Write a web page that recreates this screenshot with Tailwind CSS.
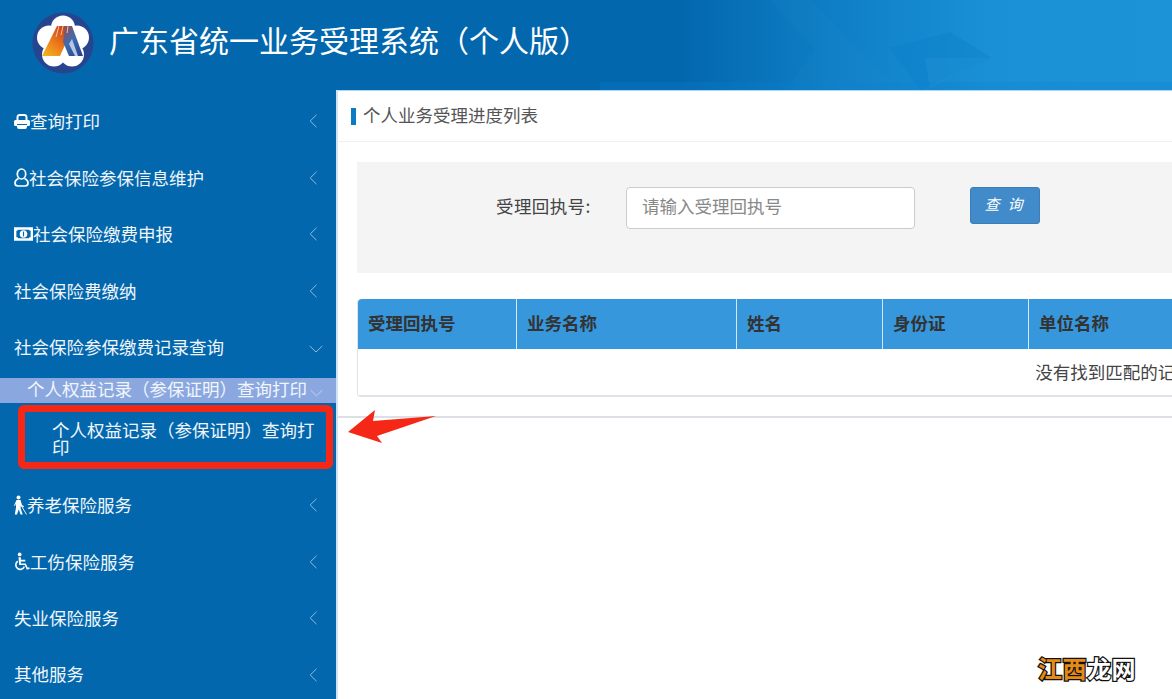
<!DOCTYPE html>
<html lang="zh-CN">
<head>
<meta charset="utf-8">
<script src="https://cdn.jsdelivr.net/npm/@tailwindcss/browser@4"></script>
<title>广东省统一业务受理系统</title>
</head>
<body class="relative w-[1172px] h-[699px] overflow-hidden bg-white font-['Noto_Sans_CJK_SC','Noto_Sans',sans-serif]">
<header class="relative h-[90px] overflow-hidden bg-[linear-gradient(90deg,#0367ad_0%,#0367ad_58%,#0f80c8_72%,#1a91d6_85%,#1b93d6_100%)]">
  <svg class="absolute right-0 top-0" width="572" height="90" viewBox="0 0 572 90">
    <polygon points="170,0 215,50 185,90 300,90 210,0" fill="#ffffff" fill-opacity="0.015"/>
    <polygon points="290,48 350,32 392,58 320,90" fill="#0b7fc8" fill-opacity="0.4"/>
    <polygon points="325,58 392,58 330,88" fill="#2495d8" fill-opacity="0.35"/>
    <rect x="0" y="82" width="572" height="8" fill="#0b80cf" fill-opacity="0.25"/>
  </svg>
  <div class="relative flex items-center h-[90px] pl-[32px] gap-[16px]">
    <svg width="62" height="62" viewBox="0 0 62 62" class="shrink-0 mt-[-4px]">
      <defs>
        <linearGradient id="org" x1="0.8" y1="0" x2="0.1" y2="1"><stop offset="0" stop-color="#c9401f"/><stop offset="0.55" stop-color="#ee7d1a"/><stop offset="1" stop-color="#f5b321"/></linearGradient>
        <linearGradient id="blu" x1="0.2" y1="0" x2="0.8" y2="1"><stop offset="0" stop-color="#8a4f5c"/><stop offset="0.45" stop-color="#3f6db0"/><stop offset="1" stop-color="#27458f"/></linearGradient>
      </defs>
      <circle cx="31" cy="31" r="30.500" fill="#27458f"/>
      <g fill="#ffffff"><circle cx="31" cy="15.500" r="12"/><circle cx="45" cy="25.500" r="12"/><circle cx="40" cy="42.500" r="12"/><circle cx="22" cy="42.500" r="12"/><circle cx="17" cy="25.500" r="12"/><circle cx="31" cy="31" r="14"/></g>
      <path d="M25 14h8l3 12-8 18H10z" fill="url(#org)"/>
      <path d="M33 14h7l11 30H37l-6-14z" fill="url(#blu)"/>
      <path d="M40 27l6 17h-3l-6-12z" fill="#b7c8e6"/>
      <path d="M27 14l-3 11M31 14l-2 9M36 14l-1 7" stroke="#f6d0b0" stroke-width="0.900" fill="none"/>
    </svg>
    <h1 class="text-[30px] leading-[40px] text-white font-normal mt-[-12px] ml-[-1px] whitespace-nowrap">广东省统一业务受理系统（个人版）</h1>
  </div>
</header>

<div class="flex h-[609px]">
  <aside class="w-[336px] shrink-0 bg-[#0367ad] text-[#f0f6fb] text-[17.5px] pt-[3px] overflow-hidden">
    <a class="flex items-center h-[56.5px] pl-[14px] pr-[19px]">
      <svg width="16" height="15" viewBox="0 0 16 15" class="shrink-0"><path fill="none" stroke="#fff" stroke-width="2" d="M3.500 7V3A2.200 2.200 0 0 1 5.700 1h4.600A2.200 2.200 0 0 1 12.500 3v4"/><path fill="#fff" d="M1.500 6h13A1.500 1.500 0 0 1 16 7.500v3A1.500 1.500 0 0 1 14.500 12H13V10H3v2H1.500A1.500 1.500 0 0 1 0 10.500v-3A1.500 1.500 0 0 1 1.500 6z"/><path fill="#fff" d="M3 11h10v2a2 2 0 0 1-2 2H5a2 2 0 0 1-2-2z"/></svg>
      <span class="flex-1">查询打印</span>
      <svg width="8" height="14" viewBox="0 0 8 14" fill="none" stroke="#8dbcdc" stroke-width="1"><path d="M7.500.8 1.200 7l6.300 6.200"/></svg>
    </a>
    <a class="flex items-center h-[56.5px] pl-[14px] pr-[19px]">
      <svg width="15" height="19" viewBox="0 0 15 19" fill="none" stroke="#fff" stroke-width="1.700" class="shrink-0"><ellipse cx="7.500" cy="6" rx="4.200" ry="5"/><path d="M4.500 10.500C2 11.500 1 13 1 15c0 2 1.500 3 3 3h7c1.500 0 3-1 3-3 0-2-1-3.500-3.500-4.500"/></svg>
      <span class="flex-1">社会保险参保信息维护</span>
      <svg width="8" height="14" viewBox="0 0 8 14" fill="none" stroke="#8dbcdc" stroke-width="1"><path d="M7.500.8 1.200 7l6.300 6.200"/></svg>
    </a>
    <a class="flex items-center h-[56.5px] pl-[14px] pr-[19px]">
      <svg width="19" height="14" viewBox="0 0 20 14" class="shrink-0"><path fill="#fff" fill-rule="evenodd" d="M0 0h20v14H0zm2.500 3.500v7c1.500 0 2 .7 2 1h11c0-.3.500-1 2-1v-7c-1.500 0-2-.7-2-1h-11c0 .3-.5 1-2 1zm7.500-.5a4 4 0 1 1 0 8 4 4 0 0 1 0-8z"/><path fill="#0367ad" d="M9.400 4.500h1.200v5H9.400z"/></svg>
      <span class="flex-1">社会保险缴费申报</span>
      <svg width="8" height="14" viewBox="0 0 8 14" fill="none" stroke="#8dbcdc" stroke-width="1"><path d="M7.500.8 1.200 7l6.300 6.200"/></svg>
    </a>
    <a class="flex items-center h-[56.5px] pl-[14px] pr-[19px]">
      <span class="flex-1">社会保险费缴纳</span>
      <svg width="8" height="14" viewBox="0 0 8 14" fill="none" stroke="#8dbcdc" stroke-width="1"><path d="M7.500.8 1.200 7l6.300 6.200"/></svg>
    </a>
    <a class="flex items-center h-[56.5px] pl-[14px] pr-[13px]">
      <span class="flex-1">社会保险参保缴费记录查询</span>
      <svg width="14" height="8" viewBox="0 0 14 8" fill="none" stroke="#8dbcdc" stroke-width="1" class="mt-[4px]"><path d="M.8 1 7 7l6.200-6"/></svg>
    </a>
    <a class="flex items-center h-[25px] mt-[2.500px] pl-[27px] pr-[13px] bg-[#8ba7e0] leading-[21px]">
      <span class="flex-1 whitespace-nowrap mt-[-5px]">个人权益记录（参保证明）查询打印</span>
      <svg width="13" height="8" viewBox="0 0 14 8" fill="none" stroke="#c9d8f2" stroke-width="1" class="mt-[5px]"><path d="M.8 1 7 7l6.200-6"/></svg>
    </a>
    <div class="h-[74px] pt-[18px] pl-[52px] pr-[19px] leading-[17px]">个人权益记录（参保证明）查询打印</div>
    <a class="flex items-center h-[56.5px] pl-[14px] pr-[19px]">
      <svg width="13" height="20" viewBox="0 0 13 19" class="shrink-0"><circle cx="4.500" cy="2" r="2" fill="#fff"/><path fill="#fff" d="M2.500 4.500h4l1.500 5 2 1.200-.4 1L6.700 10.500V13l2 6H6.500l-1.700-5.200L3 19H.8l1.200-7V8L1 10.500 0 10z"/><path stroke="#fff" stroke-width=".9" d="M7.500 10.500 12.500 19"/></svg>
      <span class="flex-1">养老保险服务</span>
      <svg width="8" height="14" viewBox="0 0 8 14" fill="none" stroke="#8dbcdc" stroke-width="1"><path d="M7.500.8 1.200 7l6.300 6.200"/></svg>
    </a>
    <a class="flex items-center h-[56.5px] pl-[14px] pr-[19px]">
      <svg width="16" height="19" viewBox="0 0 17 19" class="shrink-0"><circle cx="6" cy="2" r="2" fill="#fff"/><path fill="#fff" d="M4.800 5h2.500v2.700h4.700v1.800H7.300v2h5.200l2.200 4.600 1.500-.5.600 1.500-3.100 1.200-2.300-5H5.500z"/><path fill="none" stroke="#fff" stroke-width="1.700" d="M4 9.200a4.700 4.700 0 1 0 7 5.600"/></svg>
      <span class="flex-1">工伤保险服务</span>
      <svg width="8" height="14" viewBox="0 0 8 14" fill="none" stroke="#8dbcdc" stroke-width="1"><path d="M7.500.8 1.200 7l6.300 6.200"/></svg>
    </a>
    <a class="flex items-center h-[56.5px] pl-[14px] pr-[19px]">
      <span class="flex-1">失业保险服务</span>
      <svg width="8" height="14" viewBox="0 0 8 14" fill="none" stroke="#8dbcdc" stroke-width="1"><path d="M7.500.8 1.200 7l6.300 6.200"/></svg>
    </a>
    <a class="flex items-center h-[56px] pl-[14px] pr-[19px]">
      <span class="flex-1">其他服务</span>
      <svg width="8" height="14" viewBox="0 0 8 14" fill="none" stroke="#8dbcdc" stroke-width="1"><path d="M7.500.8 1.200 7l6.300 6.200"/></svg>
    </a>
  </aside>

  <main class="flex-1 min-w-0 border-l-2 border-[#cfe3f3] overflow-hidden">
    <section class="h-[328px] border-t border-b-2 border-t-[#a9d8f5] border-b-[#dcdfe3] bg-white">
      <div class="flex items-center h-[51px] pl-[13px] gap-[7px] border-b border-[#f0f0f0] text-[17.5px] text-[#555]">
        <span class="w-[5px] h-[17px] bg-[#0b7cc4] mt-[1px]"></span>
        <span class="mt-[-1px]">个人业务受理进度列表</span>
      </div>
      <div class="flex mt-[20px] ml-[19px] h-[111px] bg-[#f4f4f4] pt-[25px] items-start">
        <label class="ml-[139px] w-[130px] mt-[6px] text-[17.5px] leading-[26px] tracking-[0.4px] text-[#444]">受理回执号:</label>
        <div class="w-[289px] h-[42px] rounded-[4px] border border-[#ccc] bg-white pl-[15px] text-[17.5px] leading-[35px] text-[#888]">请输入受理回执号</div>
        <button class="ml-[55px] w-[70px] h-[37px] rounded-[3px] bg-[#428bca] border border-[#3a7fbb] text-white text-[15px] italic tracking-[8px] pl-[5px] leading-[32px] pb-[3px]">查询</button>
      </div>
      <div class="w-[1514px] ml-[19px] mt-[26px] rounded-[4px] border-x border-b-2 border-[#dfe2e6] text-[17.5px] text-[#333]">
        <div class="flex h-[50px] bg-[#3797dc] font-bold items-center rounded-t-[4px]">
          <div class="w-[159px] h-full flex items-center pl-[10px] border-r border-[#d7e6f3] pb-[1px]">受理回执号</div>
          <div class="w-[220px] h-full flex items-center pl-[10px] border-r border-[#d7e6f3] pb-[1px]">业务名称</div>
          <div class="w-[146px] h-full flex items-center pl-[10px] border-r border-[#d7e6f3] pb-[1px]">姓名</div>
          <div class="w-[146px] h-full flex items-center pl-[10px] border-r border-[#d7e6f3] pb-[1px]">身份证</div>
          <div class="flex-1 h-full flex items-center pl-[10px] pb-[1px]">单位名称</div>
        </div>
        <div class="h-[46px] flex items-center justify-center bg-white text-[#444]">没有找到匹配的记录</div>
      </div>
    </section>
  </main>
</div>

<div class="absolute left-[18px] top-[405px] w-[315px] h-[64px] rounded-[6px] border-[7px] border-[#f52818]"></div>
<svg class="absolute left-[346px] top-[407px]" width="92" height="38" viewBox="0 0 92 38"><polygon points="2,25 29,3 27,14 90,9 31,29 36,36" fill="#f52818"/></svg>
<div class="absolute left-[1038px] top-[650px] flex text-[24px] leading-[36px] tracking-[0.5px] font-bold [-webkit-text-stroke:2.500px_#111] [paint-order:stroke_fill]">
  <span class="text-[#e58a14]">江</span><span class="text-[#e58a14] bg-[linear-gradient(#e58a14,#e58a14)] bg-no-repeat bg-center bg-[length:70%_55%]">西</span><span class="text-white">龙网</span>
</div>
</body>
</html>
